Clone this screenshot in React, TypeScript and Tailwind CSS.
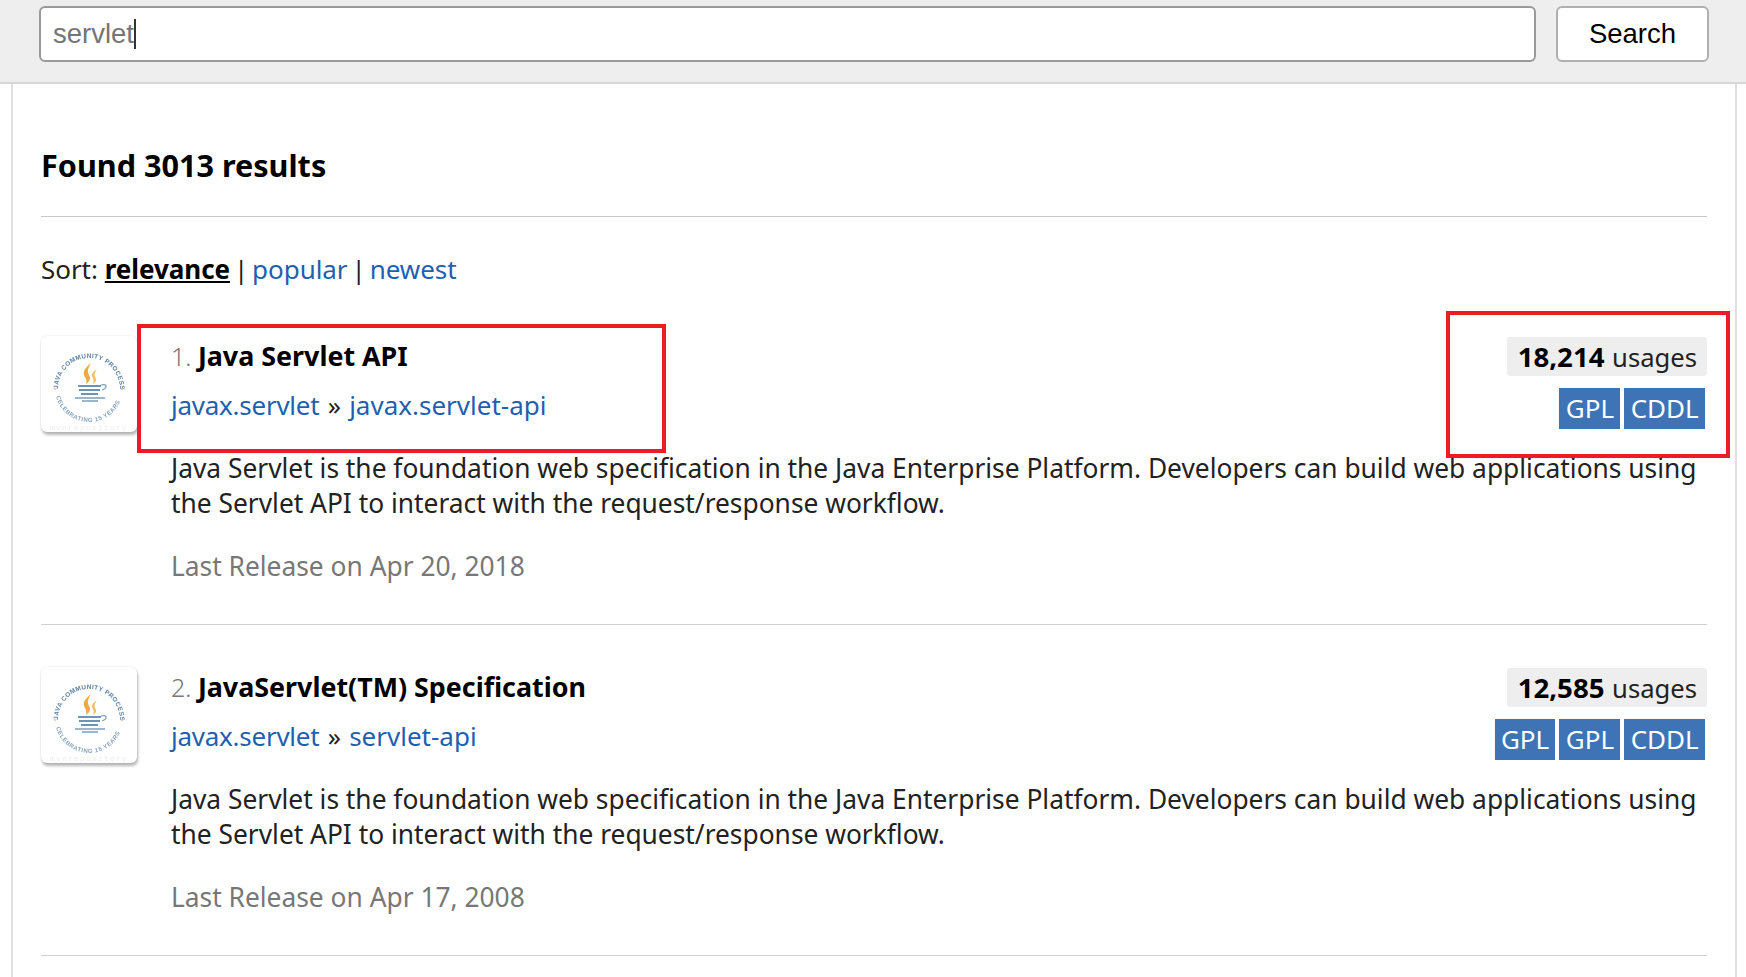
import React from "react";

type Result = {
  rank: number;
  title: string;
  group: string;
  artifact: string;
  usages: string;
  licenses: string[];
  released: string;
};

const DESCRIPTION =
  "Java Servlet is the foundation web specification in the Java Enterprise Platform. Developers can build web applications using the Servlet API to interact with the request/response workflow.";

const results: Result[] = [
  {
    rank: 1,
    title: "Java Servlet API",
    group: "javax.servlet",
    artifact: "javax.servlet-api",
    usages: "18,214",
    licenses: ["GPL", "CDDL"],
    released: "Apr 20, 2018",
  },
  {
    rank: 2,
    title: "JavaServlet(TM) Specification",
    group: "javax.servlet",
    artifact: "servlet-api",
    usages: "12,585",
    licenses: ["GPL", "GPL", "CDDL"],
    released: "Apr 17, 2008",
  },
];

const JcpLogo = ({ id }: { id: string }) => (
  <svg viewBox="0 0 96 96" className="h-full w-full blur-[0.4px]">
    <defs>
      <path id={`${id}-top`} d="M 17 53 A 31 31 0 1 1 79 53" />
      <path id={`${id}-bottom`} d="M 14 52 A 34 34 0 0 0 82 52" />
    </defs>
    <text fontSize="6.4" fontWeight="700" fill="#5b82a4" fontFamily="Liberation Sans, sans-serif" textLength="98">
      <textPath href={`#${id}-top`}>JAVA COMMUNITY PROCESS</textPath>
    </text>
    <text fontSize="6" fontWeight="700" fill="#86a4bd" fontFamily="Liberation Sans, sans-serif" textLength="84">
      <textPath href={`#${id}-bottom`} startOffset="8%">CELEBRATING 15 YEARS</textPath>
    </text>
    <circle cx="14" cy="53" r="1" fill="#f2c48a" />
    <circle cx="81" cy="53" r="1" fill="#f2c48a" />
    <path d="M50 27c-7 6-9 9-6 14 1 2 2 4 1 7 4-3 5-6 3-9-2-4-1-7 2-12Z" fill="#f0a845" />
    <path d="M56 33c-5 3-6 6-4 9 1 2 1 4 0 6 3-2 4-4 2-7-1-3 0-5 2-8Z" fill="#f3bb6c" />
    <path d="M37 50h23M38 54h21M40 58h17" stroke="#6f93b2" strokeWidth="2" fill="none" />
    <path d="M60 49c6-2 7 3 1 5" stroke="#7f9fba" strokeWidth="1.3" fill="none" />
    <path d="M34 62h30M41 65h16" stroke="#7f9fba" strokeWidth="1.5" fill="none" />
    <text x="48" y="94" textAnchor="middle" fontSize="8" fill="#eeeeee" letterSpacing="1.2" fontFamily="Liberation Mono, monospace">mvnrepository</text>
  </svg>
);

const ResultItem = ({ item }: { item: Result }) => (
  <div className="flex gap-[34px] border-b border-[#d0d0d0] pb-[40px] pt-[42px]">
    <div className="h-[96px] w-[96px] shrink-0 overflow-hidden rounded-md bg-white shadow-[1px_3px_3px_rgba(0,0,0,0.28),0_0_2px_rgba(0,0,0,0.12)]">
      <JcpLogo id={`jcp-${item.rank}`} />
    </div>
    <div className="min-w-0 flex-1 pt-[1px]">
      <div className="flex h-[114px] justify-between">
        <div>
          <div className="h-[38px] pt-[1px] text-[26.85px] leading-[36px]">
            <span className="text-[25px] font-light text-[#777777]">{item.rank}. </span>
            <span className="font-bold text-black">{item.title}</span>
          </div>
          <div className="mt-[12px] text-[26px] leading-[36px] text-[#222222]">
            <a className="tracking-[-0.25px] text-[#1f5fb0]">{item.group}</a>
            <span className="mx-[1.5px]"> » </span>
            <a className="text-[#1f5fb0]">{item.artifact}</a>
          </div>
        </div>
        <div className="flex flex-col items-end">
          <div className="h-[39px] rounded-[3px] bg-[#eeeeee] pl-[11px] pr-[10px] text-[25.6px] leading-[39px] text-[#222222]">
            <b className="text-[27.6px] font-bold text-black">{item.usages}</b>
            <span className="ml-[1px]"> usages</span>
          </div>
          <div className="mr-[2px] mt-[12px] flex gap-[4px]">
            {item.licenses.map((license, i) => (
              <span key={i} className="h-[41px] bg-[#3e74b6] px-[6.3px] text-[26px] leading-[41px] text-white">
                {license}
              </span>
            ))}
          </div>
        </div>
      </div>
      <p className="text-[26.35px] leading-[35px] text-[#222222]">{DESCRIPTION}</p>
      <div className="mt-[28px] text-[26.35px] leading-[35px] text-[#777777]">Last Release on {item.released}</div>
    </div>
  </div>
);

export default function App() {
  return (
    <div className="relative h-[977px] w-[1746px] overflow-hidden bg-white font-['Noto_Sans','Open_Sans',sans-serif]">
      {/* Search bar */}
      <div className="flex h-[84px] gap-[20px] border-b-2 border-[#d6d6d6] bg-[#eeeeee] pl-[39px] pt-[6px] font-['Liberation_Sans',Arial,sans-serif]">
        <div className="flex h-[56px] w-[1497px] items-center rounded-[6px] border-2 border-[#9a9a9a] bg-white pl-[12px] text-[27.5px] text-[#757575]">
          servlet
          <span className="h-[30px] w-[2px] bg-[#333333]" />
        </div>
        <button className="h-[56px] w-[153px] rounded-[6px] border-2 border-[#b0b0b0] bg-white text-[27.5px] text-black">
          Search
        </button>
      </div>

      {/* Content column */}
      <div className="ml-[11px] h-[893px] w-[1726px] border-x-2 border-[#e0e0e0] px-[28px]">
        <h2 className="border-b border-[#c8c8c8] pb-[30px] pt-[60px] text-[30.6px] font-bold leading-[42px] text-black">
          Found 3013 results
        </h2>
        <div className="mt-[34px] h-[36px] text-[26px] leading-[36px] tracking-[-0.05px] text-[#222222] [word-spacing:-2.8px]">
          <span className="mr-[3px]">Sort:</span> <b className="font-bold text-black underline">relevance</b> | <a className="text-[#1f5fb0]">popular</a> | <a className="text-[#1f5fb0]">newest</a>
        </div>
        <div className="mt-[7px]">
          {results.map((item) => (
            <ResultItem key={item.rank} item={item} />
          ))}
        </div>
      </div>

      {/* Red annotation boxes */}
      <div className="absolute left-[137px] top-[324px] h-[129px] w-[529px] border-[4px] border-[#ed1c24]" />
      <div className="absolute left-[1446px] top-[311px] h-[147px] w-[284px] border-[4px] border-[#ed1c24]" />
    </div>
  );
}
